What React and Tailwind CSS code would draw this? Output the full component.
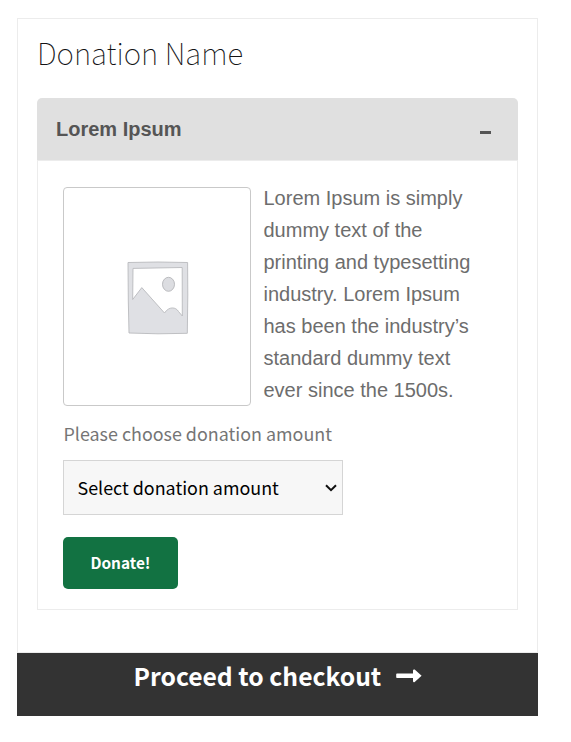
import React from "react";

function PlaceholderImage() {
  return (
    <svg className="mt-[3px] ml-[2px]" width="62" height="74" viewBox="0 0 62 74" aria-hidden="true">
      <path
        fillRule="evenodd"
        d="M1 1.5 L31 1 L60.6 1.5 L60.8 34 L60.3 72.3 L31 72.8 L2 72 L1.3 40 Z M6 7.4 L5.7 38.5 L14.8 26.6 L37.5 52 C42 45 49 46 51.5 50.5 L55.3 55 L55.2 6.5 Z"
        fill="#dfe0e4"
        stroke="#b9babd"
        strokeWidth="0.9"
      />
      <ellipse cx="41.5" cy="23.3" rx="6" ry="7" fill="#dcdde1" stroke="#b4b5b9" strokeWidth="0.9" />
    </svg>
  );
}

export default function App() {
  return (
    <div className="h-[742px] w-[571px] bg-white pt-[18px] pl-[17px] font-['Noto_Sans_CJK_JP',sans-serif]">
      <main className="w-[521px]">
        <section className="h-[635px] border border-[#ececec] px-[19px]">
          <h1 className="h-[79px] pt-[13px] text-[29.6px] leading-[42px] font-thin whitespace-nowrap text-[#131315]">
            Donation Name
          </h1>
          <div className="flex h-[62px] items-center justify-between rounded-t-[5px] bg-[#e0e0e0] pr-[27px] pl-[19px] font-['Liberation_Sans',Arial,sans-serif] text-[20px] font-bold text-[#555]">
            <span>Lorem Ipsum</span>
            <span className="mt-[7px] h-[3px] w-[11px] bg-[#555]" />
          </div>
          <div className="h-[450px] border border-[#ececec] px-[25px] pt-[26px]">
            <div className="flex gap-[12.5px]">
              <div className="flex h-[219px] w-[188px] items-center justify-center rounded-[4px] border border-[#c9c9c9]">
                <PlaceholderImage />
              </div>
              <p className="-mt-[5px] font-['Liberation_Sans',Arial,sans-serif] text-[20px] leading-8 whitespace-nowrap text-[#6d6d6d]">
                Lorem Ipsum is simply<br />
                dummy text of the<br />
                printing and typesetting<br />
                industry. Lorem Ipsum<br />
                has been the industry’s<br />
                standard dummy text<br />
                ever since the 1500s.
              </p>
            </div>
            <div className="mt-[9px] h-[45px] pl-[0.5px] text-[17.9px] leading-[36px] whitespace-nowrap text-[#757575]">
              Please choose donation amount
            </div>
            <button className="flex h-[55px] w-[280px] items-center justify-between border border-[#d5d5d5] bg-[#f7f7f7] pr-[5px] pl-[13.5px] text-[17.9px] whitespace-nowrap text-black">
              <span>Select donation amount</span>
              <svg width="12" height="8" viewBox="0 0 12 8" fill="none" stroke="#101010" strokeWidth="2">
                <path d="M1 1.2 6 6.2 11 1.2" />
              </svg>
            </button>
            <button className="mt-[22px] flex h-[52px] w-[115px] items-center justify-center rounded-[5px] bg-[#127242] text-[15.4px] font-bold text-white">
              Donate!
            </button>
          </div>
        </section>
        <button className="flex h-[63px] w-full items-start bg-[#333] pt-[1px] pl-[116.5px] text-[24.7px] leading-[42px] font-bold whitespace-nowrap text-white">
          <span className="w-[262.5px] text-left">Proceed to checkout</span>
          <svg className="mt-[15px]" width="26" height="14" viewBox="0 0 26 14" fill="#fff">
            <path d="M1 4.5h16V1.5Q17.2 0 18.7.6L25.6 6.8 18.7 13Q17.2 13.6 17 12.2V9H1Q.2 9 .2 8.2V5.3Q.2 4.5 1 4.5Z" />
          </svg>
        </button>
      </main>
    </div>
  );
}
